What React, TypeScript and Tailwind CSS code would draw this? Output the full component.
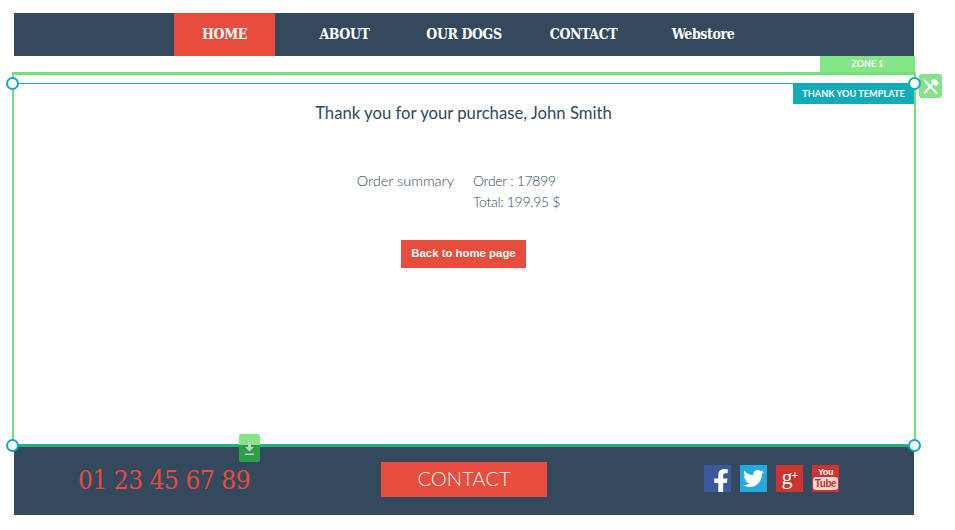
import { FaFacebookF, FaTwitter } from 'react-icons/fa';

const slab = 'font-["DejaVu_Serif_Condensed","DejaVu_Serif",serif]';
const body = 'font-["Lato","Open_Sans",sans-serif]';

function Handle({ className }: { className: string }) {
  return <span className={`absolute z-10 w-[13px] h-[13px] rounded-full bg-white border-[2.5px] border-[#12acb8] ${className}`} />;
}

function Social({ bg, children }: { bg: string; children: React.ReactNode }) {
  return <div className={`w-[27px] h-[27px] overflow-hidden flex items-center justify-center text-white ${bg}`}>{children}</div>;
}

export default function App() {
  return (
    <div className="w-[955px] h-[530px] bg-white pt-[13px] pl-[11px] overflow-hidden">
      {/* Top nav */}
      <nav className={`ml-[3px] w-[900px] h-[43px] bg-[#34495e] flex pl-[160px] text-white text-[14px] tracking-[-0.4px] font-bold ${slab}`}>
        <a className="w-[101px] bg-[#e74c3c] flex items-center justify-center">HOME</a>
        <a className="ml-[10px] w-[119px] flex items-center justify-center">ABOUT</a>
        <a className="w-[120px] flex items-center justify-center">OUR DOGS</a>
        <a className="w-[119px] flex items-center justify-center">CONTACT</a>
        <a className="w-[120px] flex items-center justify-center">Webstore</a>
      </nav>

      <div className={`ml-[809px] w-[95px] h-[16px] bg-[#84e587] text-white text-[9px] font-bold flex items-center justify-center ${body}`}>
        ZONE 1
      </div>

      {/* Zone */}
      <div className="relative ml-[1px] w-[904px] h-[375px] border-t-[3px] border-x-2 border-[#72df7a] pt-[8px]">
        <Handle className="left-[-8px] top-[2px]" />
        <Handle className="right-[-7px] top-[2px]" />
        <Handle className="left-[-8px] bottom-[-5px]" />
        <Handle className="right-[-7px] bottom-[-5px]" />

        <div className="absolute right-[-28px] top-[-1px] w-[23px] h-[24px] rounded-[3px] bg-[#84e587] flex items-center justify-center">
          <svg width="17" height="17" viewBox="0 0 17 17" fill="none" stroke="#fff">
            <path d="M2 15.500L11 5.500" strokeWidth="2" />
            <path d="M9 2.500c2-1.500 4-1.500 5.500 0l2 3-2.500 2.500-5-5z" fill="#fff" strokeWidth="0.500" />
            <path d="M1.500 1.500L5 3.500l10.500 11.500-1 1L3.500 5z" fill="#fff" strokeWidth="0.500" />
          </svg>
        </div>

        <div className="absolute left-[225px] bottom-[-15px] z-10 w-[21px] h-[28px] rounded-[2px] overflow-hidden flex flex-col items-center bg-[linear-gradient(#84e587_0_40%,#2e9e48_40%_100%)]">
          <svg width="11" height="14" viewBox="0 0 11 14" className="mt-[8px]">
            <path d="M4 0h3v5h3l-4.500 4.500L1 5h3z" fill="#c5d0c8" />
            <rect x="1" y="11.500" width="9" height="1.500" fill="#c5d0c8" />
          </svg>
        </div>

        <div className={`relative h-[364px] border-t border-[#12acb8] flex flex-col items-center text-[#34495e] ${body}`}>
          <div className="absolute right-0 top-0 w-[121px] h-[20px] bg-[#12acb8] text-white text-[9.2px] font-bold flex items-center justify-center">
            THANK YOU TEMPLATE
          </div>
          <h1 className="mt-[18px] text-[16.700px] leading-[22px] ml-[-1px]">Thank you for your purchase, John Smith</h1>
          <div className="mt-[46px] w-full flex text-[14px] leading-[21px] font-light">
            <div className="w-[440px] text-right text-[14.500px]">Order summary</div>
            <div className="ml-[19px] tracking-[-0.3px]">
              <div>Order : 17899</div>
              <div>Total: 199.95 $</div>
            </div>
          </div>
          <button className='mt-[28px] ml-[-1px] w-[125px] h-[28px] bg-[#e74c3c] text-white text-[11.400px] font-bold font-["Liberation_Sans",sans-serif]'>
            Back to home page
          </button>
        </div>
        <div className="absolute left-0 right-0 bottom-0 h-[3px] bg-[linear-gradient(#12b8a8,#2eae5a)]" />
      </div>

      {/* Footer */}
      <footer className="ml-[3px] w-[900px] h-[68px] bg-[#34495e] flex items-center">
        <div className={`ml-[64px] w-[173px] mt-[-2px] text-[26px] tracking-[-0.45px] leading-none text-[#e74c3c] whitespace-nowrap ${slab}`}>01 23 45 67 89</div>
        <a className={`ml-[130px] mt-[-3px] w-[166px] h-[35px] pb-[2px] bg-[#e74c3c] text-white text-[20.200px] font-light flex items-center justify-center ${body}`}>CONTACT</a>
        <div className="ml-[157px] flex gap-[9px] mt-[-5px]">
          <Social bg="bg-[#3b5998]"><FaFacebookF size={25} className="mt-[6px] ml-[7px]" /></Social>
          <Social bg="bg-[#24a9e1]"><FaTwitter size={21} /></Social>
          <Social bg="bg-[#ce3330]">
            <span className='font-["Liberation_Serif",serif] text-[22px] leading-[22px] pb-[3px] tracking-[-1px]'>g<span className="text-[12px] font-bold align-[5px] leading-none">+</span></span>
          </Social>
          <Social bg="bg-[#ce3330]">
            <div className='flex flex-col items-center font-["Liberation_Sans",sans-serif] font-bold tracking-[-0.4px]'>
              <span className="text-[9px] leading-[10px]">You</span>
              <span className="bg-[#f3d5d4] text-[#ce3330] rounded-[3px] px-[2px] text-[10px] leading-[13px]">Tube</span>
            </div>
          </Social>
        </div>
      </footer>
    </div>
  );
}
